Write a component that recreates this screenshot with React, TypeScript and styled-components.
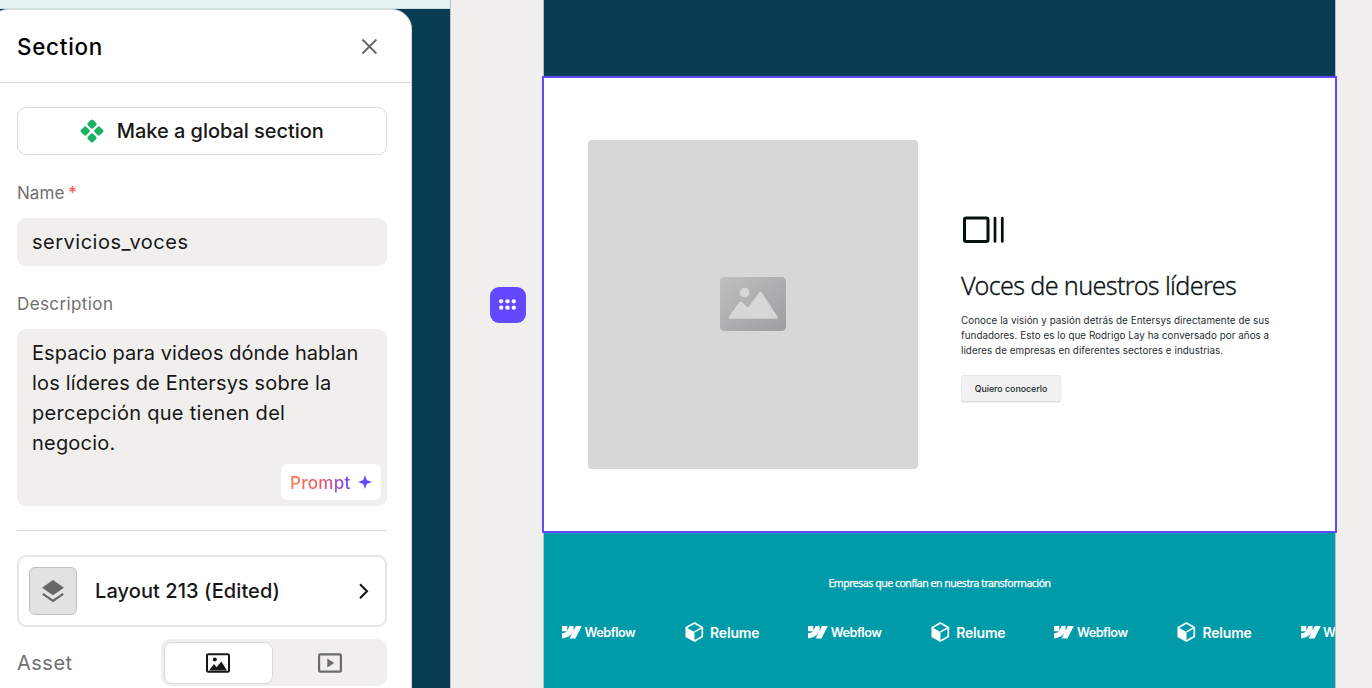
import React from "react";
import styled, { createGlobalStyle } from "styled-components";

const Global = createGlobalStyle`
  *, *::before, *::after { box-sizing: border-box; }
  html, body { margin: 0; padding: 0; overflow: hidden; }
  body { font-family: Inter, "Liberation Sans", sans-serif; color: #171717; }
  button { font: inherit; color: inherit; background: none; border: 0; padding: 0; }
  p, h1, h2 { margin: 0; font-weight: 400; }
  svg { display: block; flex: none; }
`;

const Shell = styled.div`
  display: flex;
  width: 1372px;
  height: 688px;
  overflow: hidden;
  background: #f0efee;
`;

const Rail = styled.div`
  flex: none;
  width: 451px;
  height: 688px;
  background: #093d53;
  border-right: 1px solid #b9c3c5;
`;

const RailTop = styled.div`
  height: 9px;
  background: #e3f3f4;
  border-bottom: 1px solid #cfdfe0;
`;

const Panel = styled.aside`
  width: 424px;
  height: 700px;
  margin-left: -12px;
  background: #fff;
  border: 1px solid #dadada;
  border-radius: 20px;
`;

const PanelHeader = styled.header`
  display: flex;
  align-items: center;
  justify-content: space-between;
  height: 73px;
  padding: 0 33px 0 28px;
  border-bottom: 1px solid #dadada;
`;

const Title = styled.h1`
  color: #000;
  font-size: 22.4px;
  font-weight: 500;
  line-height: 31px;
  letter-spacing: 0.75px;
`;

const PanelBody = styled.div`
  display: flex;
  flex-direction: column;
  padding: 24px 24px 0 28px;
`;

const GlobalButton = styled.button`
  display: flex;
  align-items: center;
  justify-content: center;
  gap: 12.5px;
  height: 48px;
  border: 1px solid #dadada;
  border-radius: 9px;
  font-size: 20px;
  font-weight: 500;
  letter-spacing: -0.05px;
`;

const Label = styled.label<{ $spacing?: number }>`
  display: flex;
  gap: 4px;
  margin-top: 26px;
  height: 25px;
  color: #707070;
  font-size: 17px;
  line-height: 25px;
  letter-spacing: ${(p) => p.$spacing ?? 0.05}px;
`;

const Required = styled.span`
  color: #ff4d4f;
`;

const Field = styled.div<{ $height: number }>`
  display: flex;
  flex-direction: column;
  height: ${(p) => p.$height}px;
  margin-top: 12px;
  padding: 9px 6px 6px 15px;
  border-radius: 9px;
  background: #f0efee;
  font-size: 20px;
  line-height: 30px;
`;

const TextLine = styled.span<{ $spacing: number }>`
  white-space: nowrap;
  letter-spacing: ${(p) => p.$spacing}px;
`;

const PromptButton = styled.button`
  display: flex;
  align-items: center;
  gap: 7px;
  align-self: flex-end;
  width: 100px;
  height: 36px;
  margin-top: auto;
  padding-left: 9px;
  border-radius: 6px;
  background: #fff;
  font-size: 17px;
  font-weight: 500;
  line-height: 24px;
`;

const PromptText = styled.span`
  margin-top: 2px;
  letter-spacing: 0.3px;
  color: transparent;
  background: linear-gradient(90deg, #ff7a50 0%, #f85a5a 45%, #6248ff 100%);
  background-clip: text;
  -webkit-background-clip: text;
`;

const Divider = styled.div`
  height: 1px;
  margin: 24px 0;
  background: #dadada;
`;

const LayoutRow = styled.button`
  display: flex;
  align-items: center;
  height: 72px;
  padding: 0 15px 0 10px;
  border: 2px solid #e6e6e6;
  border-radius: 9px;
  font-size: 20px;
  font-weight: 500;
`;

const LayoutName = styled.span`
  flex: 1;
  margin-left: 18px;
  text-align: left;
  white-space: nowrap;
  letter-spacing: 0.08px;
`;

const LayerTile = styled.span`
  display: flex;
  align-items: center;
  justify-content: center;
  width: 48px;
  height: 48px;
  border: 1px solid #c0c0be;
  border-radius: 6px;
  background: #e2e2de;
`;

const AssetRow = styled.div`
  display: flex;
  align-items: center;
  justify-content: space-between;
  margin-top: 12px;
  color: #707070;
  font-size: 20px;
  letter-spacing: 0.5px;
`;

const Segmented = styled.div`
  display: flex;
  width: 226px;
  height: 47px;
  padding: 3px;
  border-radius: 9px;
  background: #f0efee;
`;

const Segment = styled.button<{ $active?: boolean }>`
  display: flex;
  flex: ${(p) => (p.$active ? "0 0 109px" : "1")};
  align-items: center;
  justify-content: center;
  height: 42px;
  padding: ${(p) => (p.$active ? "0 1px 0 0" : "0 0 0 3px")};
  border: 1px solid ${(p) => (p.$active ? "#dadada" : "transparent")};
  border-radius: 8px;
  background: ${(p) => (p.$active ? "#fff" : "transparent")};
  color: ${(p) => (p.$active ? "#171717" : "#6b6b6b")};
`;

const Gutter = styled.div`
  display: flex;
  flex: none;
  align-items: flex-start;
  width: 91px;
  padding: 287px 0 0 39px;
`;

const DragHandle = styled.button`
  display: flex;
  align-items: center;
  justify-content: center;
  width: 36px;
  height: 36px;
  border-radius: 9px;
  background: #6248ff;
`;

const Page = styled.main`
  display: flex;
  flex: none;
  flex-direction: column;
  width: 795px;
  height: 688px;
`;

const DarkBand = styled.div`
  height: 76px;
  margin: 0 1px;
  border: solid #b3bdc1;
  border-width: 0 1px;
  background: #093d53;
`;

const Selected = styled.section`
  display: flex;
  align-items: flex-start;
  height: 457px;
  padding: 61.6px 0 0 44px;
  border: 2px solid #6248ff;
  background: #fff;
`;

const Placeholder = styled.div`
  display: flex;
  flex: none;
  align-items: center;
  justify-content: center;
  width: 329.5px;
  height: 329.5px;
  border-radius: 4px;
  background: #d6d8d7;
`;

const Copy = styled.div`
  display: flex;
  flex-direction: column;
  align-items: flex-start;
  padding: 76.4px 0 0 43.5px;
  color: #0d1517;
`;

const Headline = styled.h2`
  margin-top: 24px;
  font-family: "Noto Sans", "Open Sans", sans-serif;
  font-size: 25.2px;
  font-weight: 300;
  line-height: 34px;
  letter-spacing: -0.66px;
  white-space: nowrap;
  -webkit-text-stroke: 0.3px #0d1517;
`;

const Paragraph = styled.p`
  display: flex;
  flex-direction: column;
  margin-top: 10.6px;
  color: #252d2e;
  font-size: 9.8px;
  line-height: 15px;
`;

const CtaButton = styled.button`
  width: 100px;
  height: 27px;
  margin-top: 17px;
  border: 1px solid #e9e9e9;
  border-bottom-color: #dcdcdc;
  border-radius: 3px;
  background: #f1f1f1;
  box-shadow: 0 1px 1px rgba(0, 0, 0, 0.07);
  color: #20292a;
  font-size: 8.8px;
  font-weight: 500;
`;

const Logos = styled.section`
  flex: 1;
  margin: 0 1px;
  padding-top: 42px;
  overflow: hidden;
  border: solid #b2c6c8;
  border-width: 0 1px;
  background: #009ba8;
  color: #fff;
`;

const LogosTitle = styled.p`
  font-family: "Noto Sans", "Open Sans", sans-serif;
  font-size: 10.5px;
  line-height: 16px;
  text-align: center;
  letter-spacing: -0.46px;
  -webkit-text-stroke: 0.25px #fff;
`;

const LogoStrip = styled.div`
  display: flex;
  margin-top: 31px;
  padding-left: 18px;
`;

const Logo = styled.div<{ $gap: number; $size: number; $spacing: number }>`
  display: flex;
  flex: none;
  align-items: center;
  gap: ${(p) => p.$gap}px;
  width: 123.1px;
  height: 20px;
  font-size: ${(p) => p.$size}px;
  font-weight: 600;
  letter-spacing: ${(p) => p.$spacing}px;
`;

const Webflow = () => (
  <Logo $gap={2.5} $size={12.7} $spacing={-0.5}>
    <svg width="20" height="13" viewBox="0 0 20 13" fill="#fff">
      <path d="M19.8 0 13.5 12.4H7.6l2.6-5.2h-.1C8 10 4.8 12 0 12.4V7.4s3-.2 4.8-2.1H0V0h5.3v4.4h.1L7.600 0h4v4.4h.1L13.9 0Z" />
    </svg>
    <span>Webflow</span>
  </Logo>
);

const Relume = () => (
  <Logo $gap={6} $size={14} $spacing={-0.2}>
    <svg width="19" height="20" viewBox="0 0 19 20">
      <path d="M9.5 1.1 17.3 5.4V14.5L9.5 18.9 1.3 14.5V5.4Z" fill="none" stroke="#fff" strokeWidth="1.7" strokeLinejoin="round" />
      <path d="M1.3 5.4 9.5 9.9V19L1.3 14.5Z" fill="#fff" />
      <path d="m9.5 9.9 7.5-4.3" stroke="#fff" strokeWidth="1.5" />
    </svg>
    <span>Relume</span>
  </Logo>
);

const CloseIcon = () => (
  <svg width="18" height="18" viewBox="0 0 18 18" stroke="#666" strokeWidth="1.8" fill="none">
    <path d="m2.4 2.5 14 14M16.4 2.5 2.4 16.5" />
  </svg>
);

const GlobalIcon = () => (
  <svg width="24" height="24" viewBox="0 0 24 24" fill="#17b364">
    {[[12, 5.2], [5.2, 12], [18.8, 12], [12, 18.8]].map(([x, y]) => (
      <rect key={`${x}-${y}`} x={x - 3.7} y={y - 3.7} width="7.4" height="7.4" rx="1.6" transform={`rotate(45 ${x} ${y})`} />
    ))}
  </svg>
);

const SparkIcon = () => (
  <svg width="14" height="14" viewBox="0 0 14 14" fill="#6248ff">
    <path d="M7 0 8.7 4.9Q8.8 5.2 9.1 5.3L14 7 9.1 8.7Q8.8 8.8 8.7 9.1L7 14 5.3 9.1Q5.2 8.8 4.9 8.7L0 7 4.9 5.3Q5.2 5.2 5.3 4.9Z" />
  </svg>
);

const LayersIcon = () => (
  <svg width="24" height="24" viewBox="0 0 24 24">
    <path d="M12 1.3 22.5 8.7 12 16 1.5 8.7Z" fill="#666" stroke="#666" strokeWidth=".6" strokeLinejoin="round" />
    <path d="m1.8 14.8 10.2 7.1 10.2-7.1" fill="none" stroke="#666" strokeWidth="2.2" />
  </svg>
);

const ChevronIcon = () => (
  <svg width="12" height="18" viewBox="0 0 12 18" fill="none" stroke="#171717" strokeWidth="2.1">
    <path d="m2 2.2 7 7-7 7" />
  </svg>
);

const ImageIcon = () => (
  <svg width="24" height="20" viewBox="0 0 24 20">
    <rect x="1" y="1.2" width="22" height="17.6" rx="1.2" fill="none" stroke="currentColor" strokeWidth="2" />
    <circle cx="8.8" cy="6.6" r="2" fill="currentColor" />
    <path d="M3 17.5 8 11l2.6 3.3L15.3 8.5 21 17.5Z" fill="currentColor" />
  </svg>
);

const VideoIcon = () => (
  <svg width="24" height="20" viewBox="0 0 24 20">
    <rect x="1.1" y="1.3" width="21.8" height="17.4" rx="1" fill="none" stroke="currentColor" strokeWidth="2.2" />
    <path d="M9.3 5.5 16.2 10 9.3 14.5Z" fill="currentColor" />
  </svg>
);

const DotsIcon = () => (
  <svg width="18" height="12" viewBox="0 0 18 12" fill="#fff">
    {[2.2, 8.5, 14.8].map((x) =>
      [2.3, 8.7].map((y) => <circle key={`${x}-${y}`} cx={x} cy={y} r="2.15" />)
    )}
  </svg>
);

const PictureGlyph = () => (
  <svg width="66" height="54" viewBox="0 0 66 54">
    <defs>
      <linearGradient id="glyph" x1="0" y1="0" x2="1" y2="1">
        <stop offset="0" stopColor="#bec0c0" />
        <stop offset="1" stopColor="#9b9f9f" />
      </linearGradient>
    </defs>
    <rect width="66" height="54" rx="4.5" fill="url(#glyph)" />
    <circle cx="24.5" cy="15.5" r="4.8" fill="#d6d8d7" />
    <path d="M20.5 25.5 28 32.5 40.5 16 56.5 40.5H10Z" fill="#d6d8d7" stroke="#d6d8d7" strokeWidth="2.5" strokeLinejoin="round" />
  </svg>
);

const LayoutGlyph = () => (
  <svg width="44" height="28" viewBox="0 0 44 28" fill="none" stroke="#06100f" strokeWidth="3" strokeLinecap="round">
    <rect x="3.5" y="2" width="23.5" height="23.5" rx="1.8" />
    <path d="M34 2v23.5M41.3 2v23.5" strokeWidth="2.7" />
  </svg>
);

export default function App() {
  return (
    <>
      <Global />
      <Shell>
        <Rail>
          <RailTop />
          <Panel>
            <PanelHeader>
              <Title>Section</Title>
              <CloseIcon />
            </PanelHeader>
            <PanelBody>
              <GlobalButton>
                <GlobalIcon />
                Make a global section
              </GlobalButton>
              <Label>
                Name <Required>*</Required>
              </Label>
              <Field $height={48}>
                <TextLine $spacing={0.5}>servicios_voces</TextLine>
              </Field>
              <Label $spacing={0.4}>Description</Label>
              <Field $height={177}>
                <TextLine $spacing={0.04}>Espacio para videos dónde hablan</TextLine>
                <TextLine $spacing={0.17}>los líderes de Entersys sobre la</TextLine>
                <TextLine $spacing={0.28}>percepción que tienen del</TextLine>
                <TextLine $spacing={0.2}>negocio.</TextLine>
                <PromptButton>
                  <PromptText>Prompt</PromptText>
                  <SparkIcon />
                </PromptButton>
              </Field>
              <Divider />
              <LayoutRow>
                <LayerTile>
                  <LayersIcon />
                </LayerTile>
                <LayoutName>Layout 213 (Edited)</LayoutName>
                <ChevronIcon />
              </LayoutRow>
              <AssetRow>
                Asset
                <Segmented>
                  <Segment $active>
                    <ImageIcon />
                  </Segment>
                  <Segment>
                    <VideoIcon />
                  </Segment>
                </Segmented>
              </AssetRow>
            </PanelBody>
          </Panel>
        </Rail>
        <Gutter>
          <DragHandle>
            <DotsIcon />
          </DragHandle>
        </Gutter>
        <Page>
          <DarkBand />
          <Selected>
            <Placeholder>
              <PictureGlyph />
            </Placeholder>
            <Copy>
              <LayoutGlyph />
              <Headline>Voces de nuestros líderes</Headline>
              <Paragraph>
                <TextLine $spacing={0.06}>Conoce la visión y pasión detrás de Entersys directamente de sus</TextLine>
                <TextLine $spacing={0.06}>fundadores. Esto es lo que Rodrigo Lay ha conversado por años a</TextLine>
                <TextLine $spacing={0.06}>líderes de empresas en diferentes sectores e industrias.</TextLine>
              </Paragraph>
              <CtaButton>Quiero conocerlo</CtaButton>
            </Copy>
          </Selected>
          <Logos>
            <LogosTitle>Empresas que confían en nuestra transformación</LogosTitle>
            <LogoStrip>
              <Webflow />
              <Relume />
              <Webflow />
              <Relume />
              <Webflow />
              <Relume />
              <Webflow />
            </LogoStrip>
          </Logos>
        </Page>
      </Shell>
    </>
  );
}
